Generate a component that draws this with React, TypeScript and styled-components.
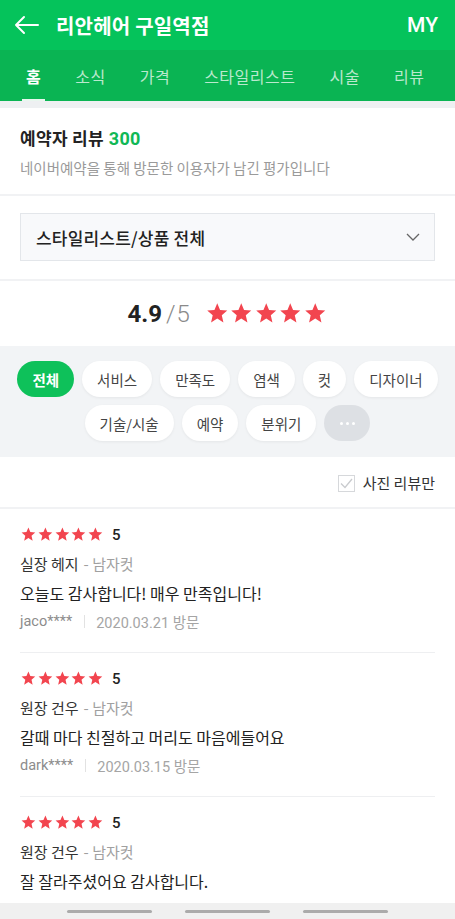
import React from "react";
import styled, { createGlobalStyle } from "styled-components";

const Global = createGlobalStyle`
  html, body { margin: 0; padding: 0; background: #fff; }
  body { font-family: "Noto Sans CJK KR", "Noto Sans", Roboto, sans-serif; -webkit-font-smoothing: antialiased; }
  * { box-sizing: border-box; }
`;

const Page = styled.div`
  position: relative;
  width: 455px;
  height: 919px;
  overflow: hidden;
  background: #fff;
`;

const TitleBar = styled.div`
  height: 50px;
  background: #05c35b;
  display: flex;
  align-items: center;
  padding: 0 17px 0 14px;
  color: #fff;
`;

const Title = styled.div`
  flex: 1;
  margin-left: 17px;
  font-size: 20px;
  font-weight: 600;
  letter-spacing: 0.2px;
`;

const My = styled.div`
  font-family: Roboto, "Noto Sans", sans-serif;
  font-size: 21px;
  font-weight: 500;
`;

const TabBar = styled.div`
  height: 51px;
  background: #0ab453;
  display: flex;
  align-items: stretch;
  padding-left: 22px;
  gap: 26px;
`;

const Tab = styled.div<{ $active?: boolean }>`
  position: relative;
  display: flex;
  align-items: center;
  padding: 0 4px;
  font-size: 16px;
  letter-spacing: 0.5px;
  font-weight: ${(p) => (p.$active ? 700 : 400)};
  color: ${(p) => (p.$active ? "#fff" : "rgba(255,255,255,0.72)")};
  &::after {
    content: "";
    display: ${(p) => (p.$active ? "block" : "none")};
    position: absolute;
    left: 0;
    right: 0;
    bottom: 0;
    height: 2px;
    background: #e8f7ee;
  }
`;

const GapStrip = styled.div`
  height: 7px;
  background: #eef0f2;
`;

const Intro = styled.div`
  padding: 17px 20px 0;
  height: 88px;
  border-bottom: 2px solid #f1f2f4;
`;

const IntroTitle = styled.div`
  font-size: 17px;
  font-weight: 700;
  color: #222;
  line-height: 26px;
  letter-spacing: 0.3px;
`;

const Count = styled.span`
  color: #10b856;
  font-family: Roboto, "Noto Sans", sans-serif;
  font-weight: 700;
  margin-left: 5px;
  font-size: 18px;
`;

const IntroSub = styled.div`
  font-size: 14.5px;
  color: #9a9a9a;
  line-height: 20px;
  margin-top: 6px;
`;

const FilterWrap = styled.div`
  padding: 17px 20px 18px;
  border-bottom: 2px solid #f1f2f4;
`;

const Select = styled.div`
  height: 48px;
  border: 1px solid #e3e6ea;
  background: #f8f9fb;
  display: flex;
  align-items: center;
  justify-content: space-between;
  padding: 0 14px 0 15px;
  font-size: 17px;
  letter-spacing: 0.2px;
  color: #222;
  font-weight: 500;
`;

const RatingRow = styled.div`
  height: 65px;
  display: flex;
  align-items: center;
  justify-content: center;
  gap: 14px;
`;

const Score = styled.div`
  font-family: Roboto, "Noto Sans", sans-serif;
  font-size: 24px;
  color: #222;
  display: flex;
  align-items: baseline;
`;

const ScoreMain = styled.span`
  font-weight: 700;
`;

const ScoreRest = styled.span`
  color: #8a8a8a;
  font-weight: 300;
  margin-left: 4px;
  letter-spacing: 1px;
`;

const Stars = styled.div<{ $size: number }>`
  display: flex;
  line-height: 0;
  svg {
    width: ${(p) => p.$size}px;
    height: ${(p) => p.$size}px;
  }
`;

const ChipArea = styled.div`
  background: #f2f4f6;
  padding: 15px 16px 16px;
  display: flex;
  flex-wrap: wrap;
  justify-content: center;
  column-gap: 8px;
  row-gap: 8px;
`;

const Chip = styled.div<{ $active?: boolean; $more?: boolean }>`
  height: 36px;
  border-radius: 18px;
  padding: 0 15px;
  display: flex;
  align-items: center;
  justify-content: center;
  font-size: 14.5px;
  font-weight: ${(p) => (p.$active ? 700 : 400)};
  color: ${(p) => (p.$active ? "#fff" : "#444")};
  background: ${(p) => (p.$active ? "#0ec15a" : p.$more ? "#dde0e4" : "#fff")};
  box-shadow: ${(p) => (p.$active || p.$more ? "none" : "0 1px 3px rgba(0,0,0,0.06)")};
  min-width: ${(p) => (p.$more ? "46px" : "auto")};
  gap: 3px;
`;

const Dot = styled.span`
  width: 3px;
  height: 3px;
  border-radius: 50%;
  background: #fff;
`;

const PhotoRow = styled.div`
  height: 52px;
  display: flex;
  align-items: center;
  justify-content: flex-end;
  padding-right: 20px;
  gap: 8px;
  font-size: 15px;
  color: #333;
  border-bottom: 2px solid #f1f2f4;
`;

const CheckBox = styled.div`
  width: 17px;
  height: 17px;
  border: 1px solid #d6d8db;
  display: flex;
  align-items: center;
  justify-content: center;
  margin-top: 2px;
`;

const ReviewList = styled.div`
  padding: 0 20px;
`;

const Review = styled.div`
  padding: 11px 0 16px;
  border-bottom: 1px solid #eeeff1;
`;

const Line = styled.div`
  height: 29px;
  display: flex;
  align-items: center;
`;

const SmallScore = styled.span`
  font-family: Roboto, "Noto Sans", sans-serif;
  font-size: 15px;
  font-weight: 500;
  color: #222;
  margin-left: 8px;
`;

const Name = styled.span`
  font-size: 15px;
  color: #333;
`;

const Menu = styled.span`
  font-size: 15px;
  color: #a0a0a0;
  margin-left: 5px;
`;

const Body = styled.div`
  font-size: 16px;
  color: #222;
  height: 29px;
  display: flex;
  align-items: center;
`;

const Meta = styled.div`
  height: 29px;
  display: flex;
  align-items: center;
  font-family: Roboto, "Noto Sans CJK KR", sans-serif;
  font-size: 14.5px;
  color: #8c8c8c;
`;

const Sep = styled.span`
  width: 1px;
  height: 13px;
  background: #e2e2e2;
  margin: 0 11px 0 12px;
`;

const DateText = styled.span`
  color: #a5a5a5;
`;

const BottomBar = styled.div`
  position: absolute;
  left: 0;
  right: 0;
  bottom: 0;
  height: 16px;
  background: #f0f0f0;
  display: flex;
  align-items: center;
  justify-content: center;
  gap: 33px;
`;

const Handle = styled.div`
  width: 85px;
  height: 3px;
  border-radius: 2px;
  background: #ababab;
`;

const Star = () => (
  <svg viewBox="0 0 24 24">
    <path
      d="M12 2.2l2.75 6.55 7.05.6-5.35 4.65 1.6 6.95L12 17.25 5.95 20.95l1.6-6.95L2.2 9.35l7.05-.6z"
      fill="#f2454f"
    />
  </svg>
);

const FiveStars = ({ size }: { size: number }) => (
  <Stars $size={size}>
    {[0, 1, 2, 3, 4].map((i) => (
      <Star key={i} />
    ))}
  </Stars>
);

const reviews = [
  { name: "실장 헤지", menu: "남자컷", text: "오늘도 감사합니다! 매우 만족입니다!", user: "jaco****", date: "2020.03.21 방문" },
  { name: "원장 건우", menu: "남자컷", text: "갈때 마다 친절하고 머리도 마음에들어요", user: "dark****", date: "2020.03.15 방문" },
  { name: "원장 건우", menu: "남자컷", text: "잘 잘라주셨어요 감사합니다.", user: "kim****", date: "2020.03.12 방문" },
];

const chips = ["전체", "서비스", "만족도", "염색", "컷", "디자이너", "기술/시술", "예약", "분위기"];

export default function App() {
  return (
    <Page>
      <Global />
      <TitleBar>
        <svg width="25" height="20" viewBox="0 0 25 20" fill="none" stroke="#fff" strokeWidth="2" strokeLinecap="round" strokeLinejoin="round">
          <path d="M24 10H2M10 2L2 10l8 8" />
        </svg>
        <Title>리안헤어 구일역점</Title>
        <My>MY</My>
      </TitleBar>
      <TabBar>
        {["홈", "소식", "가격", "스타일리스트", "시술", "리뷰"].map((t, i) => (
          <Tab key={t} $active={i === 0}>
            {t}
          </Tab>
        ))}
      </TabBar>
      <GapStrip />
      <Intro>
        <IntroTitle>
          예약자 리뷰<Count>300</Count>
        </IntroTitle>
        <IntroSub>네이버예약을 통해 방문한 이용자가 남긴 평가입니다</IntroSub>
      </Intro>
      <FilterWrap>
        <Select>
          스타일리스트/상품 전체
          <svg width="14" height="8" viewBox="0 0 14 8" fill="none" stroke="#666" strokeWidth="1.3">
            <path d="M1 1l6 6 6-6" />
          </svg>
        </Select>
      </FilterWrap>
      <RatingRow>
        <Score>
          <ScoreMain>4.9</ScoreMain>
          <ScoreRest>/5</ScoreRest>
        </Score>
        <FiveStars size={24.5} />
      </RatingRow>
      <ChipArea>
        {chips.map((c, i) => (
          <Chip key={c} $active={i === 0}>
            {c}
          </Chip>
        ))}
        <Chip $more>
          <Dot />
          <Dot />
          <Dot />
        </Chip>
      </ChipArea>
      <PhotoRow>
        <CheckBox>
          <svg width="13" height="11" viewBox="0 0 13 11" fill="none" stroke="#c9cbce" strokeWidth="1.3">
            <path d="M1 5.5l4 4L12 1" />
          </svg>
        </CheckBox>
        사진 리뷰만
      </PhotoRow>
      <ReviewList>
        {reviews.map((r, i) => (
          <Review key={i}>
            <Line>
              <FiveStars size={16.8} />
              <SmallScore>5</SmallScore>
            </Line>
            <Line>
              <Name>{r.name}</Name>
              <Menu>- {r.menu}</Menu>
            </Line>
            <Body>{r.text}</Body>
            <Meta>
              {r.user}
              <Sep />
              <DateText>{r.date}</DateText>
            </Meta>
          </Review>
        ))}
      </ReviewList>
      <BottomBar>
        <Handle />
        <Handle />
        <Handle />
      </BottomBar>
    </Page>
  );
}
